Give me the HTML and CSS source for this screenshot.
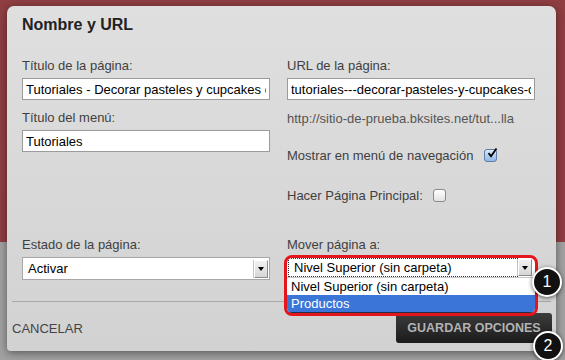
FILE: index.html
```html
<!DOCTYPE html>
<html lang="es">
<head>
  <meta charset="utf-8">
  <title>Nombre y URL</title>
  <link rel="stylesheet" href="styles.css">
</head>
<body>
  <div class="dialog">
    <h2>Nombre y URL</h2>

    <div class="fields">
      <div class="col">
        <label>Título de la página:</label>
        <input class="text-input" type="text" value="Tutoriales - Decorar pasteles y cupcakes con chocolate">

        <label class="next">Título del menú:</label>
        <input class="text-input" type="text" value="Tutoriales">

        <div class="field-bottom">
          <label>Estado de la página:</label>
          <div class="select">
            <span>Activar</span>
            <span class="select-arrow"></span>
          </div>
        </div>
      </div>

      <div class="col">
        <label>URL de la página:</label>
        <input class="text-input" type="text" value="tutoriales---decorar-pasteles-y-cupcakes-con-chocolate">

        <p class="url-preview">http://sitio-de-prueba.bksites.net/tut...lla</p>

        <div class="check-row first">
          Mostrar en menú de navegación
          <span class="checkbox checked">
            <svg width="12" height="12" viewBox="0 0 12 12"><path d="M2.5 6.2 L5 9.2 L10.5 1.5" fill="none" stroke="#000" stroke-width="1.8"/></svg>
          </span>
        </div>

        <div class="check-row second">
          Hacer Página Principal:
          <span class="checkbox"></span>
        </div>

        <div class="field-bottom">
          <label>Mover página a:</label>
          <div class="select">
            <span>Nivel Superior (sin carpeta)</span>
            <span class="select-arrow"></span>
          </div>

          <!-- open dropdown, highlighted -->
          <div class="picker">
            <div class="picker-current">
              <span class="focus">Nivel Superior (sin carpeta)</span>
              <span class="select-arrow"></span>
            </div>
            <div class="picker-option">Nivel Superior (sin carpeta)</div>
            <div class="picker-option active">Productos</div>
          </div>
        </div>
      </div>
    </div>

    <div class="dialog-footer">
      <a class="cancel" href="#">CANCELAR</a>
      <button class="save">GUARDAR OPCIONES</button>
    </div>
  </div>

  <span class="badge badge-one">1</span>
  <span class="badge badge-two">2</span>
</body>
</html>
```

FILE: styles.css
```css
:root {
  font-family: "Liberation Sans", Arial, Helvetica, sans-serif;
  font-size: 13px;
  color: #3f3f3f;
}

body {
  margin: 0;
  padding: 6px 9px 0 7px;
  height: 360px;
  box-sizing: border-box;
  overflow: hidden;
  background: linear-gradient(#8f3e42 0, #8f3e42 242px, #a1a1a1 242px);
}

.dialog {
  width: 549px;
  height: 345px;
  box-sizing: border-box;
  border-radius: 7px 7px 4px 4px;
  background: linear-gradient(#dfdfdf, #d2d2d2);
  box-shadow: 0 2px 8px rgba(0, 0, 0, 0.45);
}

h2 {
  margin: 0;
  padding: 9px 15px 0;
  font-size: 16px;
  line-height: 20px;
  font-weight: bold;
  color: #222;
}

.fields {
  display: grid;
  grid-template-columns: 248px 248px;
  grid-template-rows: 222px;
  column-gap: 17px;
  padding: 23px 15px 0;
}

.col {
  display: flex;
  flex-direction: column;
}

label {
  display: block;
  line-height: 15px;
  margin-bottom: 5px;
}

label.next {
  margin-top: 10px;
}

.text-input {
  display: block;
  width: 100%;
  height: 22px;
  box-sizing: border-box;
  margin: 0;
  padding: 0 3px;
  border: 1px solid #9b9b9b;
  background: #fff;
  font: 13px "Liberation Sans", Arial, sans-serif;
  color: #000;
  outline: none;
}

.url-preview {
  margin: 11px 0 0;
  line-height: 15px;
  color: #555;
}

.check-row {
  display: flex;
  align-items: center;
  line-height: 15px;
}

.check-row.first {
  margin-top: 22px;
  gap: 11px;
}

.check-row.second {
  margin-top: 25px;
  gap: 10px;
}

.checkbox {
  width: 11px;
  height: 11px;
  border: 1px solid #8a8a8a;
  border-radius: 3px;
  background: linear-gradient(#fff, #e2e2e2);
  position: relative;
}

.checkbox.checked {
  border-color: #5d7fa6;
  background: linear-gradient(#dbe9f9, #8fb7e6);
}

.checkbox svg {
  position: absolute;
  left: 1px;
  top: -3px;
}

.field-bottom {
  margin-top: auto;
  position: relative;
}

.select {
  display: flex;
  align-items: center;
  height: 23px;
  box-sizing: border-box;
  border: 1px solid #a7a7a7;
  background: #fff;
  color: #000;
  padding-left: 5px;
}

.select-arrow {
  width: 14px;
  height: 18px;
  margin-left: auto;
  margin-right: 1px;
  box-sizing: border-box;
  border: 1px solid #fff;
  border-right-color: #8c8c8c;
  border-bottom-color: #8c8c8c;
  background: linear-gradient(#f2f2f2, #d6d6d6);
  box-shadow: -1px 0 0 #c4c4c4;
  display: flex;
  align-items: center;
  justify-content: center;
}

.select-arrow::after {
  content: "";
  border-top: 4px solid #000;
  border-left: 3.5px solid transparent;
  border-right: 3.5px solid transparent;
}

/* open dropdown with red highlight */
.picker {
  position: absolute;
  left: -3px;
  top: 18px;
  width: 254px;
  height: 61px;
  box-sizing: border-box;
  border: 3px solid #e4151b;
  border-radius: 8px;
  background: #fff;
  overflow: hidden;
  color: #000;
}

.picker-current {
  display: flex;
  align-items: center;
  height: 19px;
  border-bottom: 1px solid #c8c8c8;
  padding: 0 2px 0 1px;
}

.picker-current .focus {
  flex: 1;
  height: 17px;
  line-height: 17px;
  padding-left: 5px;
  border: 1px dotted #333;
  border-right: none;
}

.picker-current .select-arrow {
  height: 17px;
  margin-left: 0;
}

.picker-option {
  height: 17px;
  line-height: 17px;
  padding-left: 4px;
}

.picker-option.active {
  background: #3a75d7;
  color: #fff;
  border-bottom: 1px solid #1f2f4a;
}

.dialog-footer {
  display: flex;
  align-items: center;
  justify-content: space-between;
  margin: 21px 5px 0;
  padding: 11px 0 8px;
  border-top: 1px solid #a9a9a9;
}

.cancel {
  color: #444;
  text-decoration: none;
}

.save {
  width: 156px;
  height: 30px;
  margin-right: -1px;
  border: none;
  border-radius: 3px;
  background: linear-gradient(#3c3c3c, #1b1b1b);
  color: #b3b3b3;
  font: bold 12.5px "Liberation Sans", Arial, sans-serif;
}

.badge {
  position: absolute;
  width: 30px;
  height: 30px;
  box-sizing: border-box;
  border: 2px solid #fff;
  border-radius: 50%;
  background: #111;
  color: #fff;
  font-size: 16px;
  line-height: 26px;
  text-align: center;
  box-shadow: 0 1px 4px rgba(0, 0, 0, 0.6);
}

.badge-one {
  left: 532px;
  top: 267px;
}

.badge-two {
  left: 533px;
  top: 331px;
}
```
